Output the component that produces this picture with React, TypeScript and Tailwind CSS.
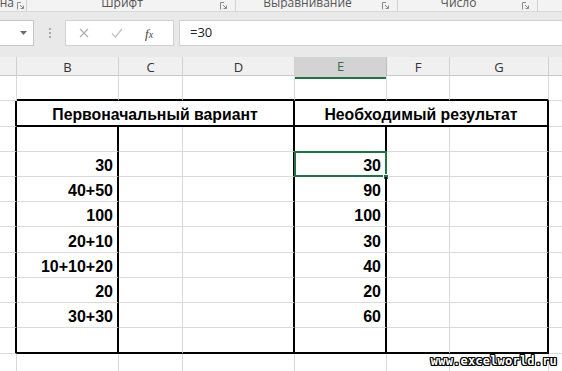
import React from 'react';

const COLS = ['B', 'C', 'D', 'E', 'F', 'G'];

// row heights of the sheet (rows 1..11)
const ROW_H = [25, 26, 25, 25, 25, 25, 26, 25, 25, 25, 26];

const LEFT = ['', '', '', '30', '40+50', '100', '20+10', '10+10+20', '20', '30+30', ''];
const RIGHT = ['', '', '', '30', '90', '100', '30', '40', '20', '60', ''];

function Launcher() {
  return (
    <svg width="8" height="8" viewBox="0 0 8 8" className="shrink-0">
      <path d="M0.5 7.5V0.5H4" fill="none" stroke="#8a8a8a" strokeWidth="1" />
      <path d="M3 3l3.5 3.5M6.5 3.5v3h-3" fill="none" stroke="#8a8a8a" strokeWidth="1" />
    </svg>
  );
}

function Ribbon() {
  const groups = [
    { label: 'на', w: 'w-[14px]', align: 'justify-end', after: 'w-[13px]' },
    { label: 'Шрифт', w: 'w-[190px]', align: 'justify-center', after: 'w-[19px]' },
    { label: 'Выравнивание', w: 'w-[143px]', align: 'justify-center', after: 'w-[19px]' },
    { label: 'Число', w: 'w-[121px]', align: 'justify-center', after: 'w-[19px]' },
  ];
  return (
    <div className="flex h-[12px] bg-[#f3f3f3] border-b border-[#d8d8d8] overflow-hidden">
      {groups.map((g, i) => (
        <div key={i} className="flex items-start">
          <div className={`${g.w} flex ${g.align} overflow-hidden whitespace-nowrap`}>
            <span className="text-[12px] leading-[12px] -mt-[3px] text-[#555]">{g.label}</span>
          </div>
          <div className={`${g.after} flex items-center justify-between pl-[3px] h-[11px]`}>
            <Launcher />
            <div className="w-px h-[11px] bg-[#d0d0d0]" />
          </div>
        </div>
      ))}
    </div>
  );
}

function FormulaBar() {
  return (
    <div className="bg-[#e9e9e9] pt-[8px] pb-[11px] h-[45px]">
      <div className="flex h-[26px]">
        {/* name box */}
        <div className="w-[34px] bg-white border-y border-r border-[#c6c6c6] flex items-center justify-end pr-[6px]">
          <svg width="7" height="4" viewBox="0 0 7 4">
            <path d="M0 0h7L3.5 4z" fill="#6d6d6d" />
          </svg>
        </div>
        <div className="w-[31px] flex items-center justify-center">
          <div className="flex flex-col gap-[2px]">
            <div className="w-[2px] h-[2px] bg-[#a8a8a8]" />
            <div className="w-[2px] h-[2px] bg-[#a8a8a8]" />
            <div className="w-[2px] h-[2px] bg-[#a8a8a8]" />
          </div>
        </div>
        {/* buttons */}
        <div className="w-[109px] bg-white border border-[#d2d2d2] flex items-center">
          <svg width="10" height="10" viewBox="0 0 10 10" className="ml-[13px]">
            <path d="M1 1l8 8M9 1l-8 8" stroke="#b0b0b0" strokeWidth="1.2" />
          </svg>
          <svg width="12" height="10" viewBox="0 0 12 10" className="ml-[22px]">
            <path d="M1 5.5l3.5 3.5L11 1" fill="none" stroke="#c4c4c4" strokeWidth="1.4" />
          </svg>
          <span className="ml-[22px] text-[13px] italic text-[#444] font-['Liberation_Serif',serif] leading-none">
            f<span className="text-[10px]">x</span>
          </span>
        </div>
        <div className="w-[5px]" />
        <div className="flex-1 bg-white border-y border-l border-[#d2d2d2] flex items-center pl-[10px]">
          <span className="text-[13px] text-[#222] font-['Open_Sans',sans-serif]">=30</span>
        </div>
      </div>
    </div>
  );
}

const GRID = 'grid grid-cols-[17px_102px_64px_112px_92px_63px_99px_1fr]';
const gridLine = 'border-[#dadada]';

function ColumnHeaders() {
  return (
    <div className={`${GRID} h-[19px] bg-[#f0f0f0] border-b border-[#c9c9c9]`}>
      <div className="border-r border-[#d0d0d0]" />
      {COLS.map((c) =>
        c === 'E' ? (
          <div
            key={c}
            className="bg-[#d3d3d3] border-r border-[#bdbdbd] border-b-2 border-b-[#217346] flex items-center justify-center text-[13px] text-[#3c6a4e] font-['Open_Sans',sans-serif]"
          >
            {c}
          </div>
        ) : (
          <div
            key={c}
            className="border-r border-[#d0d0d0] flex items-center justify-center text-[13px] text-[#333] font-['Open_Sans',sans-serif]"
          >
            {c}
          </div>
        )
      )}
      <div />
    </div>
  );
}

function Sheet() {
  const cellText =
    "flex items-end justify-end pr-[4px] pb-[2px] text-[16px] leading-none font-bold text-black font-['Liberation_Sans',Arial,sans-serif]";
  const headText =
    "col-span-3 border-r-2 border-r-black border-b-2 border-b-black flex items-end justify-center pb-[2px] text-[15.8px] leading-none font-bold text-black font-['Liberation_Sans',Arial,sans-serif]";
  return (
    <div className="flex flex-col">
      {/* row 1 */}
      <div className={`${GRID}`} style={{ height: ROW_H[0] }}>
        <div className={`border-r border-b ${gridLine}`} />
        {COLS.map((c) => (
          <div key={c} className={`border-r ${gridLine} border-b-2 border-b-black`} />
        ))}
        <div className={`border-b ${gridLine}`} />
      </div>
      {/* row 2: merged headers */}
      <div className={`${GRID}`} style={{ height: ROW_H[1] }}>
        <div className={`border-b ${gridLine} border-r-2 border-r-black`} />
        <div className={headText}>Первоначальный вариант</div>
        <div className={headText}>Необходимый результат</div>
        <div className={`border-b ${gridLine}`} />
      </div>
      {/* rows 3..11 */}
      {LEFT.slice(2).map((_, i) => {
        const idx = i + 2;
        const last = idx === LEFT.length - 1;
        const bottom = last ? 'border-b-2 border-b-black' : `border-b ${gridLine}`;
        const selected = idx === 3;
        return (
          <div key={idx} className={`${GRID}`} style={{ height: ROW_H[idx] }}>
            <div className={`border-b ${gridLine} border-r-2 border-r-black`} />
            <div className={`${cellText} border-r-2 border-r-black ${bottom}`}>{LEFT[idx]}</div>
            <div className={`border-r ${gridLine} ${bottom}`} />
            <div className={`border-r-2 border-r-black ${bottom}`} />
            <div className={`${cellText} relative border-r-2 border-r-black ${bottom}`}>
              {RIGHT[idx]}
              {selected && (
                <>
                  <div className="absolute -left-[1px] -top-[1px] -right-[2px] -bottom-[1px] border-2 border-[#217346]" />
                  <div className="absolute -right-[4px] -bottom-[4px] w-[6px] h-[6px] bg-[#217346] border border-white" />
                </>
              )}
            </div>
            <div className={`border-r ${gridLine} ${bottom}`} />
            <div className={`border-r-2 border-r-black ${bottom}`} />
            <div className={`border-b ${gridLine}`} />
          </div>
        );
      })}
      {/* row 12 */}
      <div className={`${GRID} h-[25px]`}>
        <div className={`border-r ${gridLine}`} />
        {COLS.map((c) => (
          <div key={c} className={`border-r ${gridLine}`} />
        ))}
        <div />
      </div>
    </div>
  );
}

export default function App() {
  return (
    <div className="relative w-[562px] h-[371px] overflow-hidden bg-white font-['Open_Sans',sans-serif]">
      <Ribbon />
      <FormulaBar />
      <ColumnHeaders />
      <Sheet />
      <div
        className="absolute right-[5px] bottom-[4px] text-[12px] leading-none font-bold text-white font-['DejaVu_Sans_Mono',monospace] tracking-[0.2px]"
        style={{
          textShadow:
            '1px 0 0 #000, -1px 0 0 #000, 0 1px 0 #000, 0 -1px 0 #000, 1px 1px 0 #000, -1px -1px 0 #000, 1px -1px 0 #000, -1px 1px 0 #000',
        }}
      >
        www.excelworld.ru
      </div>
    </div>
  );
}
